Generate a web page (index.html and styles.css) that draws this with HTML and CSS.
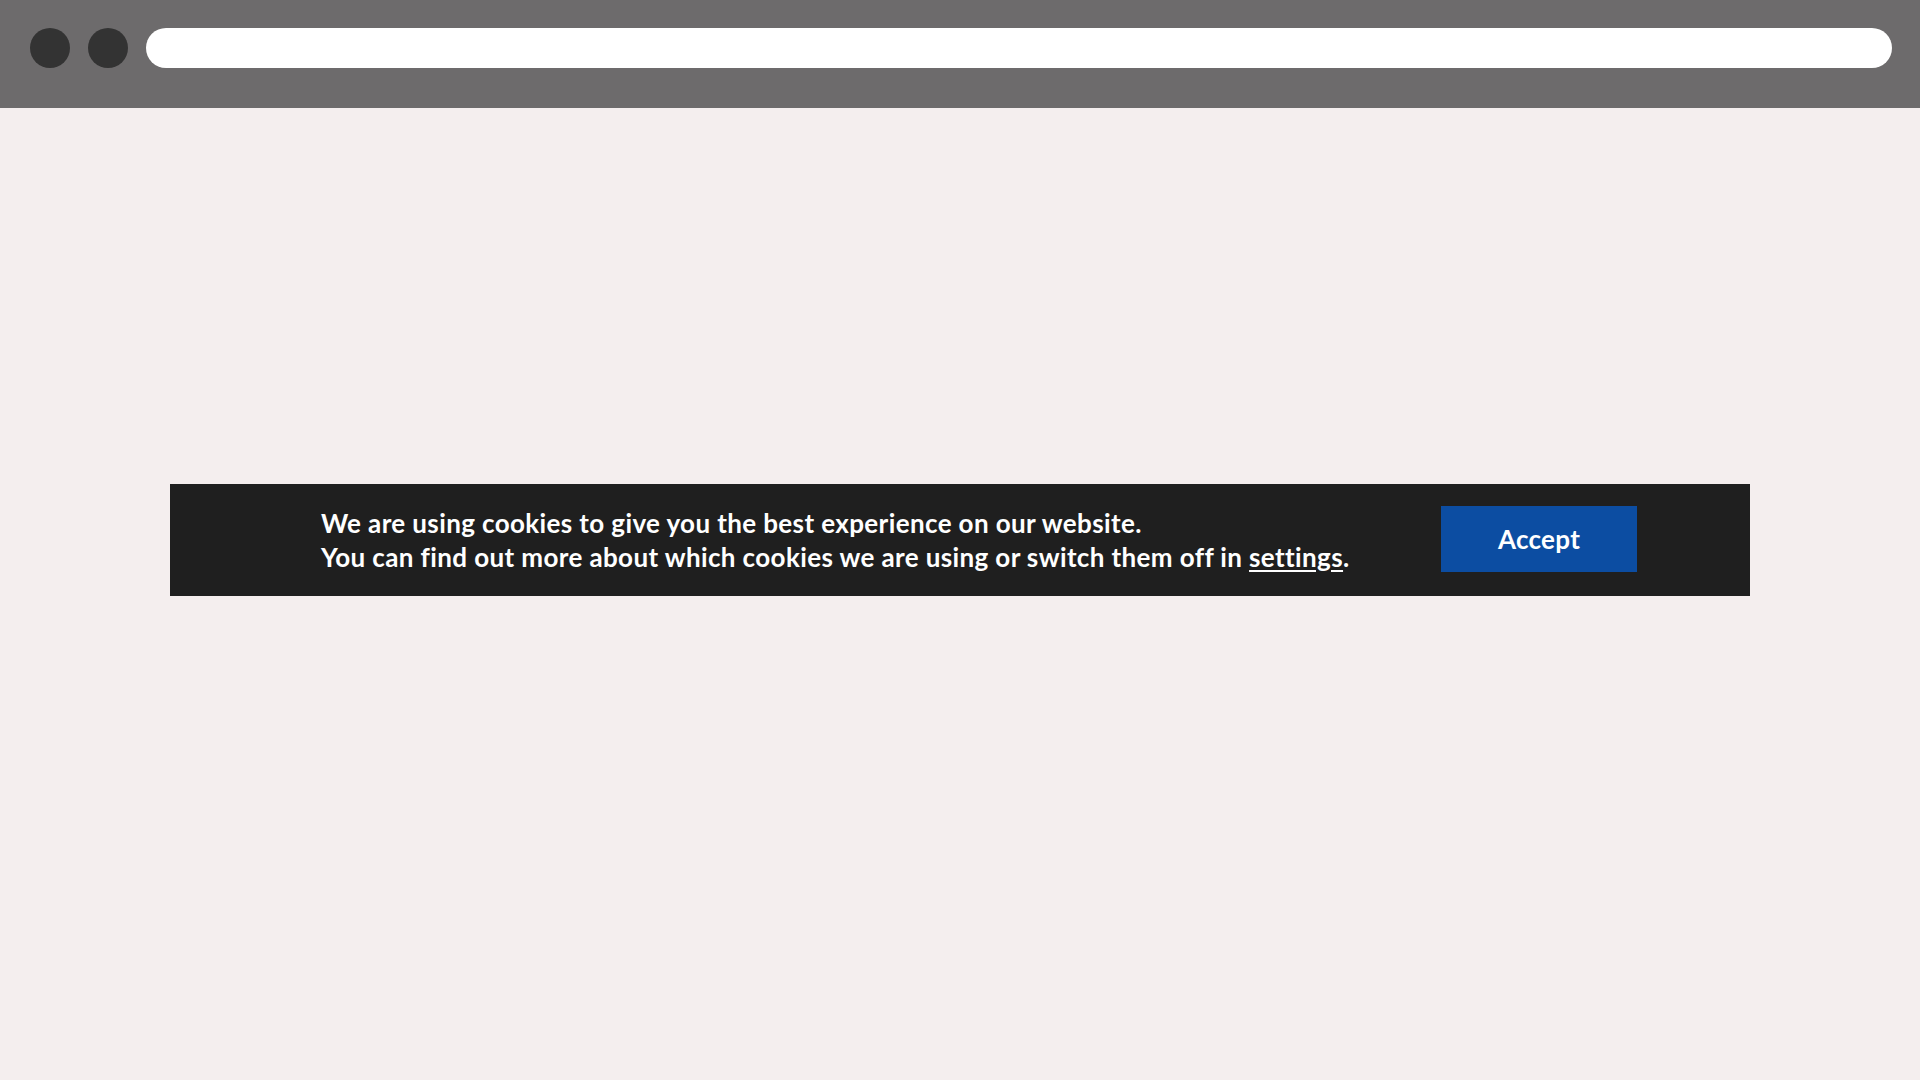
FILE: index.html
```html
<!DOCTYPE html>
<html lang="en">
<head>
<meta charset="utf-8">
<title>Cookie banner</title>
<link rel="stylesheet" href="styles.css">
</head>
<body>
<header class="chrome">
  <span class="dot"></span>
  <span class="dot"></span>
  <div class="url"></div>
</header>
<main class="page">
  <section class="cookie">
    <p class="cookie-text">We are using cookies to give you the best experience on our website.<br>You can find out more about which cookies we are using or switch them off in <a class="link" href="#">settings</a>.</p>
    <button class="accept" type="button">Accept</button>
  </section>
</main>
</body>
</html>
```
FILE: styles.css
```css
html, body {
  margin: 0;
  padding: 0;
}
body {
  width: 1920px;
  height: 1080px;
  background: #f4eeee;
  font-family: "Lato", "Noto Sans", sans-serif;
  overflow: hidden;
}
.chrome {
  height: 108px;
  box-sizing: border-box;
  background: #6d6b6c;
  display: flex;
  align-items: flex-start;
  gap: 18px;
  padding: 28px 28px 0 30px;
}
.dot {
  width: 40px;
  height: 40px;
  border-radius: 50%;
  background: #333333;
  flex: none;
}
.url {
  flex: 1;
  height: 40px;
  border-radius: 20px;
  background: #ffffff;
}
.page {
  padding-top: 376px;
  padding-left: 170px;
}
.cookie {
  width: 1580px;
  height: 112px;
  box-sizing: border-box;
  background: #1f1f1f;
  display: flex;
  align-items: center;
  justify-content: space-between;
  padding: 0 113px 0 151px;
}
.cookie-text {
  margin: 0;
  color: #ffffff;
  font-size: 26px;
  font-weight: 700;
  line-height: 34px;
  letter-spacing: 0.38px;
  padding-bottom: 1px;
}
.link {
  color: #ffffff;
  text-decoration: underline;
  text-decoration-thickness: 2px;
  text-underline-offset: 3px;
}
.accept {
  width: 196px;
  height: 66px;
  border: none;
  background: #0c4da2;
  color: #ffffff;
  font-family: inherit;
  font-size: 26px;
  font-weight: 700;
  letter-spacing: 0.3px;
  margin-top: -2px;
  cursor: pointer;
}
```
